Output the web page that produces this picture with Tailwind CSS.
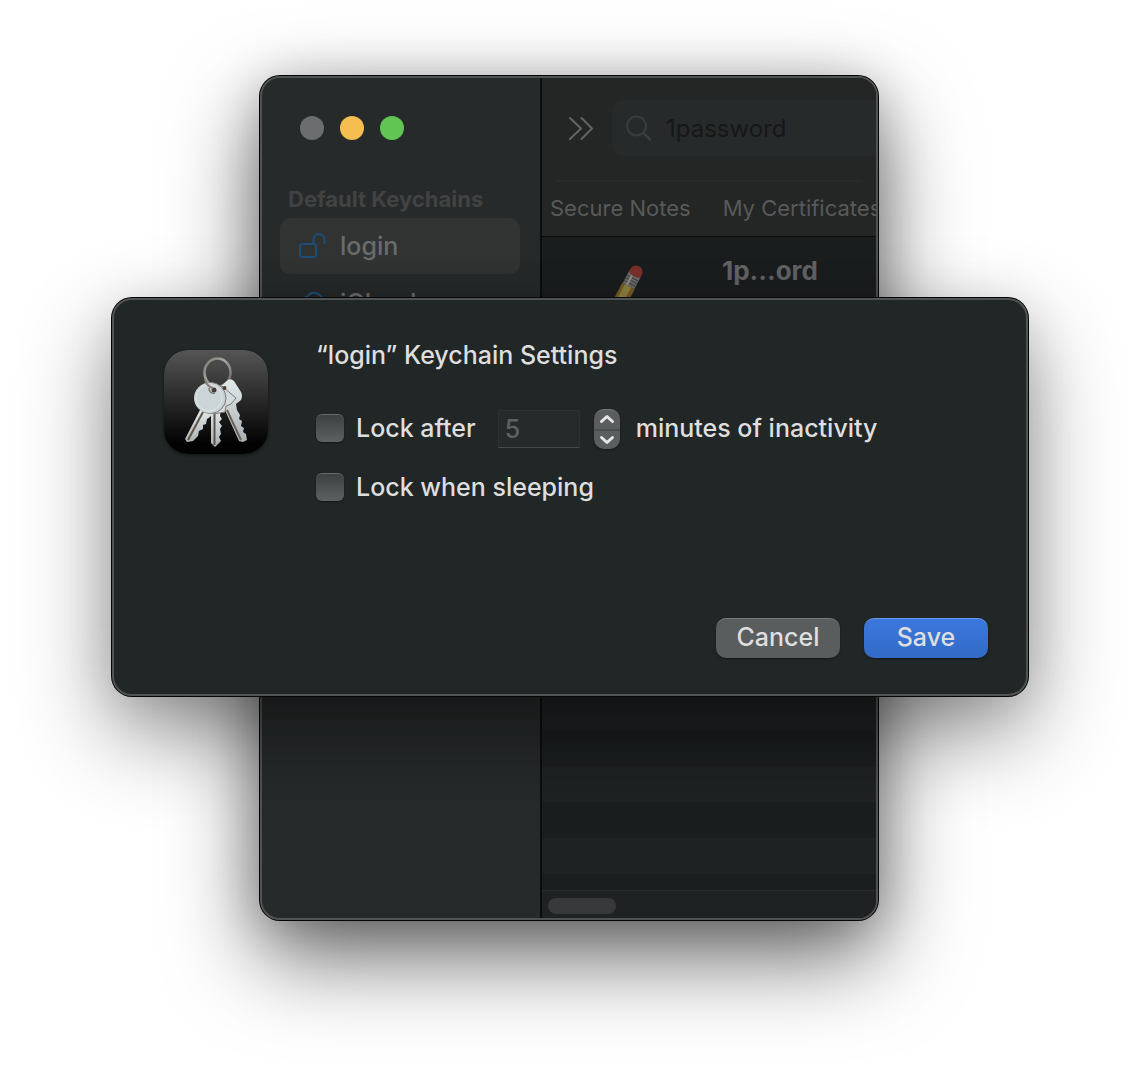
<!DOCTYPE html>
<html lang="en">
<head>
<meta charset="utf-8">
<meta name="viewport" content="width=device-width, initial-scale=1">
<title>Keychain Settings</title>
<script src="https://cdn.jsdelivr.net/npm/@tailwindcss/browser@4"></script>
</head>
<body class="bg-white font-['Inter',sans-serif]">
<main class="grid min-h-screen grid-cols-1 content-start justify-items-center overflow-hidden pt-19">

  <!-- Main window, dimmed behind the sheet -->
  <section aria-label="Keychain Access" class="col-start-1 row-start-1 mr-0.5 flex min-h-[844px] w-full max-w-[618px] overflow-hidden rounded-[20px] border-2 border-[#505354] bg-[#272a2b] shadow-[0_0_0_1px_#050505,0_36px_90px_rgba(0,0,0,0.6),0_6px_50px_rgba(0,0,0,0.2)]">
    <aside class="w-[280px] shrink-0 border-r-2 border-[#0c0d0d] pt-[38px] pr-5 pl-[18px]">
      <div class="flex gap-4 pl-5">
        <button aria-label="Close" class="size-6 rounded-full bg-[#6b6d6f]"></button>
        <button aria-label="Minimize" class="size-6 rounded-full bg-[#f6be50]"></button>
        <button aria-label="Zoom" class="size-6 rounded-full bg-[#61c554]"></button>
      </div>
      <h2 class="mt-11 pl-2 text-[22px] leading-[30px] font-bold text-[#414342]">Default Keychains</h2>
      <nav class="mt-1 text-[25px] font-medium text-[#6b6d6d]">
        <a href="#" class="flex h-14 items-center gap-3 rounded-[10px] bg-[#323433] pl-[18px]">
          <svg class="h-8 w-[30px]" viewBox="0 0 30 32" fill="none" stroke="#1f4e78" stroke-width="2" stroke-linecap="round">
            <rect x="2" y="14" width="16" height="13" rx="2.500"/>
            <path d="M15.500 14V9.500a5.500 5.500 0 0 1 11 0V13"/>
          </svg>
          <span class="pt-0.5">login</span>
        </a>
        <a href="#" class="flex h-14 items-center gap-3 pl-[18px]">
          <svg class="h-8 w-[30px]" viewBox="0 0 30 32" fill="none" stroke="#1f4e78" stroke-width="2" stroke-linecap="round">
            <path d="M8 25a6 6 0 0 1-3-11a4 4 0 0 1 4-3a8 8 0 0 1 15 3a6 6 0 0 1-1 11Z"/>
          </svg>
          <span class="pt-1">iCloud</span>
        </a>
      </nav>
    </aside>

    <div class="flex min-w-0 flex-1 flex-col overflow-hidden bg-[#1b1e1f]">
      <header class="h-[159px] shrink-0 border-b border-[#0b0c0c] bg-[#232625] pt-[22px]">
        <div class="flex items-center pl-[27px]">
          <button aria-label="More">
            <svg class="size-6" viewBox="0 0 24 24" fill="none" stroke="#626564" stroke-width="2" stroke-linecap="round" stroke-linejoin="round"><path d="M1 2L12 12.500L1 23M12.500 2L23 12.500L12.500 23"/></svg>
          </button>
          <label class="ml-[19px] flex h-14 w-80 shrink-0 items-center gap-3 rounded-xl bg-[#272a2b] pl-3">
            <svg class="size-7" viewBox="0 0 28 28" fill="none" stroke="#3b3d3d" stroke-width="2" stroke-linecap="round"><circle cx="12.500" cy="12" r="9.500"/><path stroke-width="2.500" d="M19.500 19l6.500 6.500"/></svg>
            <input type="search" aria-label="Search" value="1password" class="w-50 bg-transparent pt-0.5 pl-0.5 text-[24px] text-[#161717] outline-none">
          </label>
        </div>
        <hr class="mx-3.5 mt-6 h-0.5 border-0 bg-[#272a2a]">
        <nav class="mt-[11px] flex gap-8 pl-2 text-[22px] leading-[30px] whitespace-nowrap text-[#585a5a]">
          <a href="#">Secure Notes</a>
          <a href="#">My Certificates</a>
        </nav>
      </header>
      <div class="flex gap-[76px] pt-[18px] pl-16">
        <svg class="h-16 w-10 shrink-0" viewBox="0 0 40 64">
          <g transform="translate(30 17) rotate(28)">
            <path d="M-6.500 0a6.500 6.500 0 0 1 13 0V4Q0 7-6.500 4Z" fill="#7d302b"/>
            <path d="M-6.500 3Q0 7 6.500 3V16H-6.500Z" fill="#6c6c6b"/>
            <path d="M-6.500 7H6.500M-6.500 10H6.500M-6.500 13H6.500" stroke="#444" stroke-width="1"/>
            <path d="M-2 5V16" stroke="#929292" stroke-width="2"/>
            <path d="M-7 16H7V50H-7Z" fill="#7b5b22"/>
            <path d="M-4 16H3V50H-4Z" fill="#8f8443"/>
          </g>
        </svg>
        <h1 class="text-[26px] leading-8 font-bold text-[#626465]">1p...ord</h1>
      </div>
      <div class="mt-auto">
        <div class="h-9 bg-[#1f2223]"></div>
        <div class="h-9 bg-[#1b1e1f]"></div>
        <div class="h-9 bg-[#1f2223]"></div>
        <div class="h-9 bg-[#1b1e1f]"></div>
        <div class="h-9 bg-[#1f2223]"></div>
        <div class="h-4 bg-[#1b1e1f]"></div>
      </div>
      <div class="h-7 shrink-0 border-t border-[#2a2b2b] bg-[#1f2223] pt-[7px] pl-1.5">
        <div class="h-4 w-[68px] rounded-full bg-[#37393a]"></div>
      </div>
    </div>
  </section>

  <!-- Settings sheet -->
  <form role="dialog" aria-labelledby="title" class="relative z-10 col-start-1 row-start-1 mb-0.5 flex min-h-[398px] w-full max-w-[916px] flex-col justify-between self-center rounded-[20px] border-2 border-[#505354] bg-[#212626] pt-10 pr-[38px] pb-9 pl-[50px] text-[25px] font-medium text-[#dededf] shadow-[0_0_0_1px_#050505,0_36px_90px_rgba(0,0,0,0.45),0_6px_50px_rgba(0,0,0,0.1)]">
    <div class="flex gap-12">
      <svg class="mt-2.5 size-[104px] shrink-0 rounded-3xl shadow-[0_1px_3px_rgba(0,0,0,0.5)]" viewBox="0 0 104 104" aria-hidden="true">
        <defs>
          <linearGradient id="tile" x2="0" y2="1"><stop stop-color="#555"/><stop offset=".9" stop-color="#020202"/></linearGradient>
          <linearGradient id="metal" x2="0" y2="1"><stop stop-color="#e3eaec"/><stop offset="1" stop-color="#a9b0b1"/></linearGradient>
          <linearGradient id="ring" x2="1" y2="1"><stop stop-color="#77736d"/><stop offset=".4" stop-color="#aaa7a1"/><stop offset="1" stop-color="#65605a"/></linearGradient>
        </defs>
        <rect width="104" height="104" rx="24" fill="url(#tile)"/>
        <ellipse cx="53.500" cy="22.500" rx="13" ry="14" fill="none" stroke="url(#ring)" stroke-width="2.500"/>
        <!-- right key -->
        <path d="M57 36L64 30Q67 28 70 31L77 42Q79 46 77 50L72 54L73 60L76 65L75 69L78 71L77 76L80 78L79 82L82 84L83 90L79 92L75 91L60 58L55 50Z" fill="url(#metal)"/>
        <path d="M63 60L77 90" stroke="#6d6054" stroke-width="2"/>
        <!-- left key -->
        <path d="M36 60L49 62L46 67L43 69L42 74L39 75L39 79L35 81L34 86L29 91L23 92L21 89Z" fill="url(#metal)"/>
        <path d="M39 62L24 90" stroke="#625347" stroke-width="2"/>
        <!-- middle key -->
        <path d="M47 60L57 58L56 66L58 69L55 72L58 76L56 79L57 84L55 87L57 91L51 97L47 93Z" fill="url(#metal)"/>
        <path d="M50.500 61V95" stroke="#625347" stroke-width="2"/>
        <path d="M58 36L66 43L72 48L67 54L62 56L61 62L49 64Z" fill="#d3dcde" stroke="#807b73" stroke-width="1"/>
        <circle cx="46.500" cy="48" r="15.500" fill="#c8d2d5" stroke="#807b73" stroke-width="1"/>
        <circle cx="45" cy="48" r="15" fill="#cbd5d8"/>
        <circle cx="45" cy="48" r="13" fill="none" stroke="#dde5e7" stroke-width="1"/>
        <circle cx="50" cy="40" r="2.500" fill="#453b32"/>
        <path d="M41 29Q42 36 49 38" stroke="#87817a" stroke-width="2" fill="none"/>
        <path d="M45 38Q45 44 51 43" stroke="#7d756b" stroke-width="1.500" fill="none"/>
        <circle cx="60.500" cy="38" r="2" fill="#4a4037"/>
      </svg>
      <div class="flex min-w-0 flex-col">
        <h2 id="title" class="leading-[30px]">“login” Keychain Settings</h2>
        <div class="mt-[39px] flex items-center">
          <input type="checkbox" id="lock-after" class="mb-0.5 size-7 appearance-none rounded-md border-t border-[#686b6c] bg-linear-to-b from-[#3e4142] to-[#5e6162] shadow-[0_1px_2px_rgba(0,0,0,0.4)]">
          <label for="lock-after" class="pl-3">Lock after</label>
          <input type="text" aria-label="Minutes" value="5" disabled class="ml-[22px] h-[38px] w-[82px] border border-[#2d3132] border-b-[#474a4b] bg-[#262a2b] pl-1.5 text-[#5f6263]">
          <div class="ml-3.5 flex h-10 w-[26px] flex-col overflow-hidden rounded-[10px] border-t border-[#777a7b] bg-[#5b5e5f] shadow-[0_1px_2px_rgba(0,0,0,0.4)]">
            <button type="button" aria-label="Increase" class="flex flex-1 items-center justify-center border-b-2 border-[#4b4e4f]"><svg class="h-2.5 w-4" viewBox="0 0 16 10" fill="none" stroke="#e6e6e6" stroke-width="3" stroke-linecap="round" stroke-linejoin="round"><path d="M2.500 7.500L8 2.500L13.500 7.500"/></svg></button>
            <button type="button" aria-label="Decrease" class="flex flex-1 items-center justify-center"><svg class="h-2.5 w-4" viewBox="0 0 16 10" fill="none" stroke="#e6e6e6" stroke-width="3" stroke-linecap="round" stroke-linejoin="round"><path d="M2.500 2.500L8 7.500L13.500 2.500"/></svg></button>
          </div>
          <span class="pl-4">minutes of inactivity</span>
        </div>
        <div class="mt-5 flex items-center">
          <input type="checkbox" id="lock-sleep" class="mb-0.5 size-7 appearance-none rounded-md border-t border-[#686b6c] bg-linear-to-b from-[#3e4142] to-[#5e6162] shadow-[0_1px_2px_rgba(0,0,0,0.4)]">
          <label for="lock-sleep" class="pl-3">Lock when sleeping</label>
        </div>
      </div>
    </div>
    <div class="flex justify-end gap-6">
      <button type="button" class="h-10 w-31 rounded-[10px] border-t border-[#777a7b] bg-[#5a5d5e] pb-0.5 leading-none shadow-[0_1px_2px_rgba(0,0,0,0.4)]">Cancel</button>
      <button type="submit" class="h-10 w-31 rounded-[10px] border-t border-[#6b9bea] bg-linear-to-b from-[#3b78df] to-[#326ac5] pb-0.5 leading-none shadow-[0_1px_2px_rgba(0,0,0,0.4)]">Save</button>
    </div>
  </form>
</main>
</body>
</html>
